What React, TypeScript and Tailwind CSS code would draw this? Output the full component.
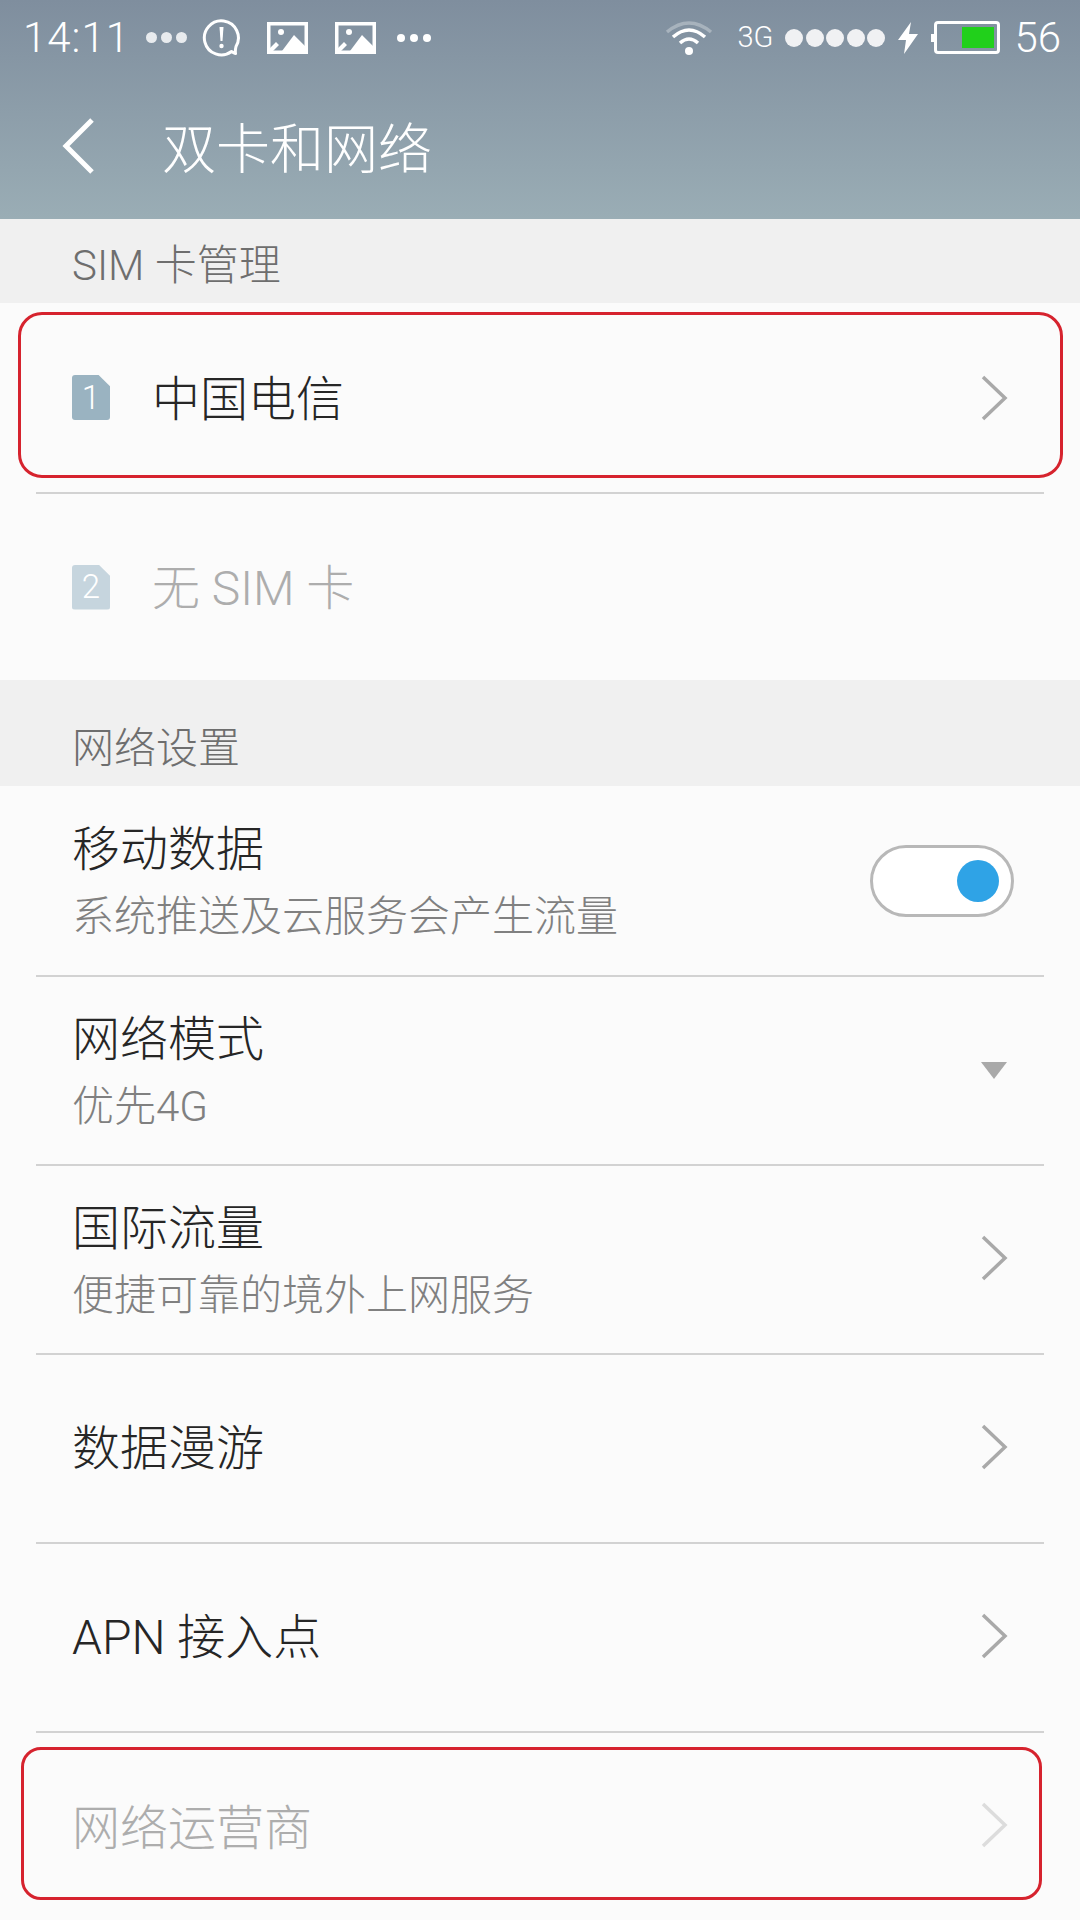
const CJK = "font-['Roboto','Noto_Sans_CJK_SC',sans-serif]"

function Chevron({ light }: { light?: boolean }) {
  return (
    <svg width="28" height="48" viewBox="0 0 28 48" fill="none" className="-mt-[3px] shrink-0">
      <path d="M3 3 L25 24 L3 45" stroke={light ? "#dcdcdc" : "#a9a9a9"} strokeWidth="3.5" />
    </svg>
  )
}

function PictureIcon() {
  return (
    <svg width="41" height="32" viewBox="0 0 41 32" className="shrink-0">
      <path fill="#fff" fillRule="evenodd" d="M0 0H41V32H0Z M3.5 3.5V28.5H37.5V3.5Z" />
      <path fill="#fff" d="M15 29 L27 13 L38 24 V29Z M3 26 L9 20 L12 23 L6 29 H3Z" />
      <circle cx="14" cy="10" r="3" fill="#fff" />
    </svg>
  )
}

function SimIcon({ n, dim }: { n: string; dim?: boolean }) {
  return (
    <div
      className={`flex h-[45px] w-[38px] shrink-0 items-center justify-center rounded-[3px] text-[33px] font-light text-white [clip-path:polygon(0_0,70%_0,100%_25%,100%_100%,0_100%)] ${
        dim ? "bg-[#c6d5de]" : "bg-[#9ab3c1]"
      }`}
    >
      {n}
    </div>
  )
}

function Section({ label, className }: { label: string; className: string }) {
  return (
    <div className={`flex items-center bg-[#f0f0f0] pl-[72px] text-[42px] text-[#6e6e6e] ${className}`}>{label}</div>
  )
}

function Divider() {
  return <div className="mx-[36px] h-[2px] bg-[#d2d2d2]" />
}

function TwoLine({
  title,
  sub,
  right,
  className = "h-[187px]",
}: {
  title: string
  sub: string
  right: React.ReactNode
  className?: string
}) {
  return (
    <div className={`flex items-center justify-between pl-[72px] pr-[66px] ${className}`}>
      <div className="mt-[6px] flex flex-col">
        <span className="text-[48px] leading-[66px] text-[#262626]">{title}</span>
        <span className="mt-[1px] text-[42px] leading-[66px] text-[#808080]">{sub}</span>
      </div>
      {right}
    </div>
  )
}

function OneLine({ title }: { title: string }) {
  return (
    <div className="flex h-[187px] items-center justify-between pl-[72px] pr-[72px]">
      <span className="text-[48px] text-[#262626]">{title}</span>
      <Chevron />
    </div>
  )
}

export default function App() {
  return (
    <div className={`flex h-[1920px] w-[1080px] flex-col overflow-hidden bg-[#fbfbfb] font-light ${CJK}`}>
      <header className="flex h-[219px] flex-col bg-gradient-to-b from-[#7f8e9e] to-[#9aadb5] text-white">
        <div className="flex h-[75px] items-center justify-between pl-[23px] pr-[19px]">
          <div className="flex items-center">
            <span className="text-[42px] font-light tracking-[1px]">14:11</span>
            <div className="ml-[16px] flex gap-[4px]">
              <i className="size-[11px] rounded-full bg-[#e8ebee]" />
              <i className="size-[11px] rounded-full bg-[#e8ebee]" />
              <i className="size-[11px] rounded-full bg-[#e8ebee]" />
            </div>
            <svg width="40" height="40" viewBox="0 0 40 40" fill="none" className="ml-[15px]">
              <path
                d="M29.5 33.5 A17 17 0 1 1 34 28.5 C33.5 30.5 33 32.5 33.5 35.5 C32 35 31 34.5 29.5 33.5 Z"
                stroke="#fff"
                strokeWidth="3"
                strokeLinejoin="round"
              />
              <path d="M17.5 9 H21.5 L20.5 23 H18.5 Z" fill="#fff" />
              <circle cx="19.5" cy="28" r="2.2" fill="#fff" />
            </svg>
            <div className="ml-[25px]">
              <PictureIcon />
            </div>
            <div className="ml-[27px]">
              <PictureIcon />
            </div>
            <div className="ml-[21px] flex gap-[5px]">
              <i className="size-[8px] rounded-full bg-white" />
              <i className="size-[8px] rounded-full bg-white" />
              <i className="size-[8px] rounded-full bg-white" />
            </div>
          </div>
          <div className="flex items-center">
            <svg width="48" height="36" viewBox="0 0 48 36" fill="none" stroke="#fff">
              <path d="M2 12 Q24 -6 46 12" strokeWidth="3.5" opacity="0.3" />
              <path d="M8 17 Q24 3 40 17" strokeWidth="3.5" />
              <path d="M15 23 Q24 15 33 23" strokeWidth="3.5" />
              <circle cx="24" cy="31" r="4" fill="#fff" stroke="none" />
            </svg>
            <span className="ml-[24px] text-[29px] font-light">3G</span>
            <div className="ml-[12px] flex gap-[2.5px]">
              <i className="size-[18px] rounded-full bg-[#f0f1f3]" />
              <i className="size-[18px] rounded-full bg-[#f0f1f3]" />
              <i className="size-[18px] rounded-full bg-[#f0f1f3]" />
              <i className="size-[18px] rounded-full bg-[#f0f1f3]" />
              <i className="size-[18px] rounded-full bg-[#f0f1f3]" />
            </div>
            <svg width="22" height="32" viewBox="0 0 22 32" className="ml-[12px]">
              <path d="M14 0 L1 18 H9 L7 32 L21 12 H12 Z" fill="#fff" />
            </svg>
            <div className="relative ml-[15px] flex h-[33px] w-[66px] items-center justify-end rounded-[4px] border-[3px] border-white pr-[3px]">
              <i className="absolute left-[-6px] top-[10px] h-[8px] w-[3px] bg-white" />
              <i className="h-[21px] w-[32px] bg-[#21d01b]" />
            </div>
            <span className="ml-[14px] text-[42px] font-light">56</span>
          </div>
        </div>
        <div className="flex flex-1 items-center pl-[61px]">
          <svg width="34" height="58" viewBox="0 0 34 58" fill="none" className="mt-[-2px]">
            <path d="M31 3 L5 29 L31 55" stroke="#fff" strokeWidth="5" />
          </svg>
          <span className="ml-[67px] mt-[6px] text-[54px] font-light">双卡和网络</span>
        </div>
      </header>

      <Section label="SIM 卡管理" className="h-[84px] pt-[8px]" />

      <div className="relative flex h-[189px] items-center justify-between pl-[72px] pr-[72px]">
        <div className="flex items-center">
          <SimIcon n="1" />
          <span className="ml-[42px] mt-[4px] text-[48px] text-[#262626]">中国电信</span>
        </div>
        <div className="mt-[4px]">
          <Chevron />
        </div>
        <div className="absolute left-[18px] right-[17px] top-[9px] h-[166px] rounded-[24px] border-[3px] border-[#d6232e]" />
      </div>
      <Divider />
      <div className="flex h-[186px] items-center pl-[72px]">
        <SimIcon n="2" dim />
        <span className="ml-[42px] mt-[4px] text-[48px] text-[#adadad]">无 SIM 卡</span>
      </div>

      <Section label="网络设置" className="h-[106px] pt-[30px]" />

      <TwoLine
        className="h-[189px]"
        title="移动数据"
        sub="系统推送及云服务会产生流量"
        right={
          <div className="flex h-[72px] w-[144px] items-center justify-end rounded-full border-[3px] border-[#b8b8b8] bg-white pr-[12px]">
            <i className="size-[42px] rounded-full bg-[#2fa3e6]" />
          </div>
        }
      />
      <Divider />
      <TwoLine
        title="网络模式"
        sub="优先4G"
        right={
          <svg width="26" height="17" viewBox="0 0 26 17" className="mr-[7px]">
            <path d="M0 0 H26 L13 17 Z" fill="#a9a9a9" />
          </svg>
        }
      />
      <Divider />
      <TwoLine title="国际流量" sub="便捷可靠的境外上网服务" right={<div className="mr-[6px]"><Chevron /></div>} />
      <Divider />
      <OneLine title="数据漫游" />
      <Divider />
      <OneLine title="APN 接入点" />
      <Divider />

      <div className="relative flex h-[187px] items-center justify-between pl-[72px] pr-[72px]">
        <span className="mt-[4px] text-[48px] text-[#adadad]">网络运营商</span>
        <Chevron light />
        <div className="absolute left-[21px] right-[38px] top-[14px] h-[153px] rounded-[20px] border-[3px] border-[#d6232e]" />
      </div>
    </div>
  )
}
